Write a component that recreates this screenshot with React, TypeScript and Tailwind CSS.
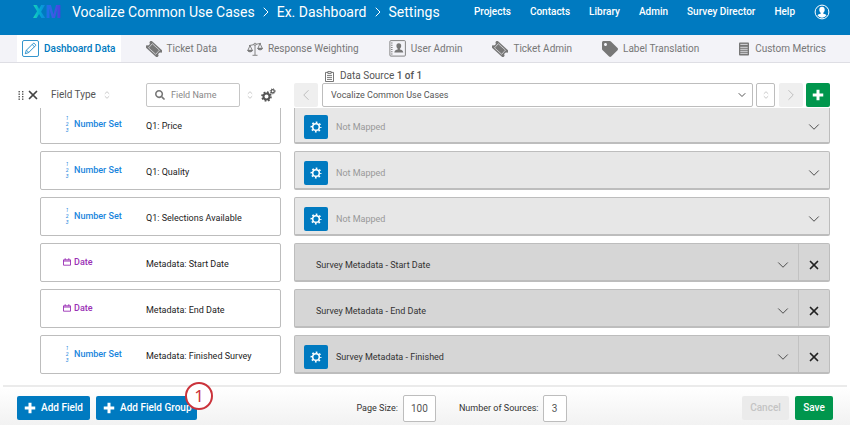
import type { ReactNode } from 'react'
import { ChevronDown, ChevronLeft, ChevronRight, Plus, X } from 'lucide-react'
import { FaSearch, FaTag } from 'react-icons/fa'

const navLinks = ['Projects', 'Contacts', 'Library', 'Admin', 'Survey Director', 'Help']

type FieldRow = {
  id: number
  type: 'number' | 'date'
  name: string
  source?: string
  gear?: boolean
}

const fields: FieldRow[] = [
  { id: 1, type: 'number', name: 'Q1: Price', gear: true },
  { id: 2, type: 'number', name: 'Q1: Quality', gear: true },
  { id: 3, type: 'number', name: 'Q1: Selections Available', gear: true },
  { id: 4, type: 'date', name: 'Metadata: Start Date', source: 'Survey Metadata - Start Date' },
  { id: 5, type: 'date', name: 'Metadata: End Date', source: 'Survey Metadata - End Date' },
  { id: 6, type: 'number', name: 'Metadata: Finished Survey', source: 'Survey Metadata - Finished', gear: true },
]

function PencilIcon() {
  return (
    <svg viewBox="0 0 17 17" className="h-[17px] w-[17px]" fill="none" stroke="currentColor">
      <rect x="0.5" y="0.5" width="16" height="16" rx="1.5" strokeWidth="0.8" />
      <path d="M3.3 13.7l1-3.4 6.9-6.9c.8-.8 3.1 1.5 2.3 2.3l-6.9 6.9zM10.2 4.5l2.2 2.2M4.5 10.2l2.2 2.2" strokeWidth="0.8" />
    </svg>
  )
}

function TicketIcon() {
  return (
    <svg viewBox="0 0 16 16" className="h-4 w-4">
      <g transform="rotate(42 8 8)">
        <path
          d="M0 3.5h16v2.6c-1 .1-1.600.9-1.600 1.900s.6 1.800 1.600 1.900v2.600H0V9.900c1-.1 1.600-.9 1.600-1.900S1 6.200 0 6.100z"
          fill="currentColor"
        />
        <path d="M3.2 5.200h9.600v5.600H3.200z" fill="none" stroke="#f3f3f8" strokeWidth="0.6" />
      </g>
    </svg>
  )
}

function ScaleIcon() {
  return (
    <svg viewBox="0 0 16 14" className="h-[14px] w-4" fill="none" stroke="currentColor" strokeWidth="0.9">
      <path d="M2 3.600l5-1M9 2.300l5-1M8 3.500v9.500M5.500 13.300h5" />
      <circle cx="8" cy="2.3" r="1.1" />
      <path d="M3 3.600L.9 8.300h4.400zM13 1.600l-2.100 4.700h4.400z" />
      <path d="M.6 8.500c.4 1.800 4.500 1.800 5 0zM10.600 6.500c.4 1.800 4.500 1.800 5 0z" fill="currentColor" />
    </svg>
  )
}

function UserBookIcon() {
  return (
    <svg viewBox="0 0 17 17" className="h-[17px] w-[17px]">
      <rect x="0.9" y="0.6" width="15.5" height="15.5" rx="1" fill="none" stroke="currentColor" strokeWidth="0.9" />
      <path d="M2.800 2.500v12" stroke="currentColor" strokeWidth="1.4" strokeDasharray="1 1.2" />
      <path
        d="M9.800 3.200c1.600 0 2.400 1 2.400 2.500 0 1.300-.6 2.300-1.300 2.900v1c1.500.5 3.200.8 3.400 2.900H5.300c.2-2.100 1.900-2.400 3.400-2.900v-1c-.7-.6-1.300-1.600-1.300-2.900 0-1.500.8-2.500 2.400-2.500z"
        fill="currentColor"
      />
    </svg>
  )
}

function MetricsIcon() {
  return (
    <svg viewBox="0 0 12 14" className="h-[14px] w-3">
      <rect x="1" y="0.5" width="10" height="13" rx="0.8" fill="currentColor" />
      <path d="M2.300 2.400h7.400M2.300 5.300h7.400M2.300 7.300h7.400M2.300 9.300h7.400M2.300 11.300h7.400" stroke="#f3f3f8" strokeWidth="0.8" />
    </svg>
  )
}

function ClipboardIcon() {
  return (
    <svg viewBox="0 0 9 11" className="h-[11px] w-[9px]" fill="none" stroke="currentColor" strokeWidth="0.8">
      <path d="M2.800 1.400H.5v9.100h8V1.400H6.200M2.800.6h3.400v1.800H2.800zM2 4.400h5M2 6.400h5M2 8.400h5" />
    </svg>
  )
}

function SortIcon() {
  return (
    <svg viewBox="0 0 6 8" className="h-2 w-[6px] text-[#c4c4c4]" fill="none" stroke="currentColor" strokeWidth="0.9">
      <path d="M.8 2.800L3 .7l2.200 2.100M.8 5.200L3 7.300l2.200-2.100" />
    </svg>
  )
}

function GripIcon() {
  return (
    <svg viewBox="0 0 6 9" className="h-[9px] w-[6px]" fill="#555">
      {[0, 2.5, 5, 7.5].map((y) => (
        <g key={y}>
          <rect x="0.5" y={y} width="1.4" height="1.4" />
          <rect x="4" y={y} width="1.4" height="1.4" />
        </g>
      ))}
    </svg>
  )
}

function CogsIcon() {
  return (
    <svg viewBox="0 0 15 14" className="h-[14px] w-[15px]" fill="none" stroke="currentColor">
      <circle cx="5.5" cy="8.5" r="3" strokeWidth="2" />
      <circle cx="5.5" cy="8.5" r="4.5" strokeWidth="1.6" strokeDasharray="1.767 1.767" />
      <circle cx="11.7" cy="3.3" r="1.6" strokeWidth="1.2" />
      <circle cx="11.7" cy="3.3" r="2.5" strokeWidth="1" strokeDasharray="0.982 0.982" />
    </svg>
  )
}

function AvatarIcon() {
  return (
    <svg viewBox="0 0 16 16" className="h-4 w-4">
      <circle cx="8" cy="8" r="6.9" fill="none" stroke="#fff" strokeWidth="1" />
      <path
        d="M8 2.800c1.800 0 2.700 1.200 2.700 2.900 0 1.300-.6 2.400-1.400 3v1c1.300.4 2.700.7 3.300 1.600A6 6 0 0 1 8 13.700a6 6 0 0 1-4.600-2.400c.6-.9 2-1.200 3.300-1.600v-1c-.8-.6-1.400-1.700-1.400-3 0-1.700.9-2.900 2.700-2.900z"
        fill="#fff"
      />
    </svg>
  )
}

function CalendarIcon() {
  return (
    <svg viewBox="0 0 8 8" className="h-2 w-2" fill="none" stroke="currentColor">
      <path d="M.5 1.800h7v5.400h-7z" strokeWidth="0.9" />
      <path d="M.5 3h7M2.200.3v1.500M5.800.3v1.500" strokeWidth="1" />
    </svg>
  )
}

function GearButton() {
  return (
    <button aria-label="Recode values" className="mr-2 flex h-6 w-6 items-center justify-center rounded-xs bg-[#007ac0] text-white">
      <svg viewBox="0 0 12 12" className="h-3 w-3" fill="none" stroke="currentColor">
        <circle cx="6" cy="6" r="3.3" strokeWidth="1.5" />
        <circle cx="6" cy="6" r="4.7" strokeWidth="1.6" strokeDasharray="1.7 1.991" strokeDashoffset="0.85" />
      </svg>
    </button>
  )
}

function Tab({ icon, label, className = '' }: { icon: ReactNode; label: string; className?: string }) {
  return (
    <a href="#" className={`flex shrink-0 items-center gap-[5px] px-[5px] whitespace-nowrap ${className}`}>
      {icon}
      <span>{label}</span>
    </a>
  )
}

function FieldCard({ field }: { field: FieldRow }) {
  const isDate = field.type === 'date'
  return (
    <div className="flex h-[39px] w-[241px] shrink-0 items-center rounded-xs border border-[#bdbdbd] bg-white pl-[19px]">
      <div className={`flex w-[86px] items-center pb-[2px] text-[9px] font-medium ${isDate ? 'text-[#9a2fb5]' : 'text-[#1a86dd]'}`}>
        <span className="flex w-[14px] justify-center">
          {isDate ? (
            <CalendarIcon />
          ) : (
            <span className="flex flex-col text-[5px] leading-[6px] font-normal italic" aria-hidden="true">
              <span>1</span>
              <span>2</span>
              <span>3</span>
            </span>
          )}
        </span>
        <span>{isDate ? 'Date' : 'Number Set'}</span>
      </div>
      <span className="pt-[2px] text-[9px] text-[#222]">{field.name}</span>
    </div>
  )
}

function SourceCard({ field }: { field: FieldRow }) {
  const mapped = Boolean(field.source)
  return (
    <div className={`flex h-[39px] flex-1 rounded-xs border border-b-2 border-[#bdbdbd] ${mapped ? 'bg-[#d6d6d6]' : 'bg-[#e7e7e7]'}`}>
      <div className={`flex flex-1 items-center pt-[6px] ${field.gear ? 'pl-[9px]' : 'pl-[21px]'}`}>
        {field.gear && <GearButton />}
        <button className={`flex flex-1 items-center justify-between pr-[6px] text-left text-[9px] ${mapped ? 'text-[#333]' : 'text-[#999]'}`}>
          {field.source ?? 'Not Mapped'}
          <ChevronDown className="h-[18px] w-[18px] text-[#444]" strokeWidth={1.25} />
        </button>
      </div>
      {mapped && (
        <button aria-label="Remove mapping" className="flex w-[31px] items-center justify-center border-l border-[#c2c2c2] pt-[6px] text-[#222]">
          <X className="h-[14px] w-[14px]" strokeWidth={3} />
        </button>
      )}
    </div>
  )
}

export default function App() {
  return (
    <div className="flex h-screen flex-col bg-white font-['Roboto',sans-serif] text-[10px] leading-3 text-[#555]">
      {/* Top bar */}
      <header className="flex h-[35px] shrink-0 items-center bg-[#007ac0] pr-5 pb-3 pl-[33px] text-white">
        <span className="w-[39px] shrink-0">
          <span className="bg-linear-to-r from-[#1fd6b4] via-[#1f6fe8] to-[#4b3bdc] bg-clip-text font-['Open_Sans',sans-serif] text-[17px] leading-5 font-extrabold text-transparent">
            XM
          </span>
        </span>
        <div className="flex flex-1 items-center gap-[3px] text-[14px] leading-5 whitespace-nowrap">
          <a href="#">Vocalize Common Use Cases</a>
          <ChevronRight className="h-4 w-4" strokeWidth={1.5} />
          <a href="#">Ex. Dashboard</a>
          <ChevronRight className="h-4 w-4" strokeWidth={1.5} />
          <span>Settings</span>
        </div>
        <nav className="flex shrink-0 items-center gap-[19px] font-medium whitespace-nowrap">
          {navLinks.map((link) => (
            <a key={link} href="#">
              {link}
            </a>
          ))}
          <a href="#" aria-label="Account">
            <AvatarIcon />
          </a>
        </nav>
      </header>

      {/* Tabs */}
      <nav className="flex h-7 shrink-0 items-stretch gap-5 border-b border-[#dedee4] bg-[#f3f3f8] pr-[19px] pl-[17px] text-[#777]">
        <Tab icon={<PencilIcon />} label="Dashboard Data" className="bg-white font-medium text-[#007ac0]" />
        <Tab icon={<TicketIcon />} label="Ticket Data" />
        <Tab icon={<ScaleIcon />} label="Response Weighting" />
        <Tab icon={<UserBookIcon />} label="User Admin" />
        <Tab icon={<TicketIcon />} label="Ticket Admin" />
        <Tab icon={<FaTag className="h-4 w-4" />} label="Label Translation" />
        <Tab icon={<MetricsIcon />} label="Custom Metrics" className="ml-auto" />
      </nav>

      {/* Filters and data source */}
      <div className="flex h-[45px] shrink-0 items-end gap-[13px] pr-5 pb-px pl-[18px]">
        <div className="flex h-6 w-[263px] items-center">
          <GripIcon />
          <button aria-label="Clear" className="ml-[2px] text-[#444]">
            <X className="h-[14px] w-[14px]" strokeWidth={3} />
          </button>
          <span className="ml-[11px] w-[53px]">Field Type</span>
          <SortIcon />
          <label className="ml-9 flex h-6 w-[94px] items-center rounded-xs border border-[#c6c6c6] pl-2">
            <FaSearch className="h-[10px] w-[10px] shrink-0 text-[#777]" />
            <input
              aria-label="Field Name"
              placeholder="Field Name"
              className="ml-[6px] w-full min-w-0 text-[9px] outline-none placeholder:text-[#888]"
            />
          </label>
          <span className="ml-[7px]">
            <SortIcon />
          </span>
          <button aria-label="Bulk edit" className="ml-2">
            <CogsIcon />
          </button>
        </div>

        <div className="flex-1">
          <div className="flex h-[14px] items-center gap-[6px] pl-[31px]">
            <ClipboardIcon />
            <span>
              Data Source <b className="font-medium">1 of 1</b>
            </span>
          </div>
          <div className="flex h-6 items-stretch">
            <button aria-label="Previous source" className="flex w-6 items-center justify-center rounded-xs bg-[#efefef] text-[#bbb]">
              <ChevronLeft className="h-[18px] w-[18px]" strokeWidth={1.25} />
            </button>
            <div className="relative ml-1 flex-1">
              <select
                aria-label="Data source"
                className="h-6 w-full appearance-none rounded-xs border border-[#bdbdbd] bg-white pl-2 text-[9px]"
              >
                <option>Vocalize Common Use Cases</option>
              </select>
              <ChevronDown className="pointer-events-none absolute top-[6px] right-[5px] h-3 w-3" strokeWidth={2} />
            </div>
            <button aria-label="Reorder sources" className="ml-[3px] flex w-[19px] items-center justify-center rounded-xs border border-[#bdbdbd]">
              <SortIcon />
            </button>
            <button aria-label="Next source" className="ml-1 flex w-6 items-center justify-center rounded-xs bg-[#efefef] text-[#bbb]">
              <ChevronRight className="h-[18px] w-[18px]" strokeWidth={1.25} />
            </button>
            <button aria-label="Add source" className="ml-[3px] flex w-6 items-center justify-center rounded-xs bg-[#00964d] text-white">
              <Plus className="h-[18px] w-[18px]" strokeWidth={4} strokeLinecap="butt" />
            </button>
          </div>
        </div>
      </div>

      {/* Field list, scrolled to the end */}
      <main className="flex min-h-0 flex-1 flex-col justify-end gap-[7px] overflow-hidden pr-5 pb-[11px] pl-10">
        {fields.map((field) => (
          <div key={field.id} className="flex shrink-0 gap-[13px]">
            <FieldCard field={field} />
            <SourceCard field={field} />
          </div>
        ))}
      </main>

      {/* Footer */}
      <div className="mx-[3px] h-[2px] shrink-0 bg-[#ebebeb]" />
      <footer className="flex h-[38px] shrink-0 items-center justify-between bg-linear-to-b from-white to-[#f2f2f2] px-[17px] pt-1">
        <div className="flex gap-[6px] font-medium text-white">
          <button className="flex h-6 w-[73px] items-center gap-[2px] rounded-xs bg-[#007ac0] pl-1">
            <Plus className="h-[18px] w-[18px]" strokeWidth={4} strokeLinecap="butt" />
            Add Field
          </button>
          <button className="relative flex h-6 w-[101px] items-center gap-[2px] rounded-xs bg-[#007ac0] pl-1 whitespace-nowrap">
            <Plus className="h-[18px] w-[18px]" strokeWidth={4} strokeLinecap="butt" />
            Add Field Group
            <span className="absolute -top-[14px] -right-4 flex h-7 w-7 items-center justify-center rounded-full border-2 border-[#cb333b] bg-white font-['Noto_Sans',sans-serif] text-[17px] leading-5 font-normal text-[#cb333b]">
              1
            </span>
          </button>
        </div>
        <div className="flex items-center pr-4 text-[9px] text-[#333]">
          <label htmlFor="page-size">Page Size:</label>
          <input
            id="page-size"
            defaultValue="100"
            className="ml-[5px] h-[27px] w-[33px] rounded-xs border border-[#bdbdbd] bg-white text-center text-[10px] text-[#555]"
          />
          <label htmlFor="sources" className="ml-[23px]">
            Number of Sources:
          </label>
          <input
            id="sources"
            defaultValue="3"
            className="ml-1 h-[27px] w-6 rounded-xs border border-[#bdbdbd] bg-white text-center text-[10px] text-[#555]"
          />
        </div>
        <div className="flex gap-[6px] font-medium">
          <button disabled className="h-6 w-[47px] rounded-xs bg-[#ebebeb] text-[#c4c4c4]">
            Cancel
          </button>
          <button className="h-6 w-[38px] rounded-xs bg-[#00964d] text-white">Save</button>
        </div>
      </footer>
    </div>
  )
}
